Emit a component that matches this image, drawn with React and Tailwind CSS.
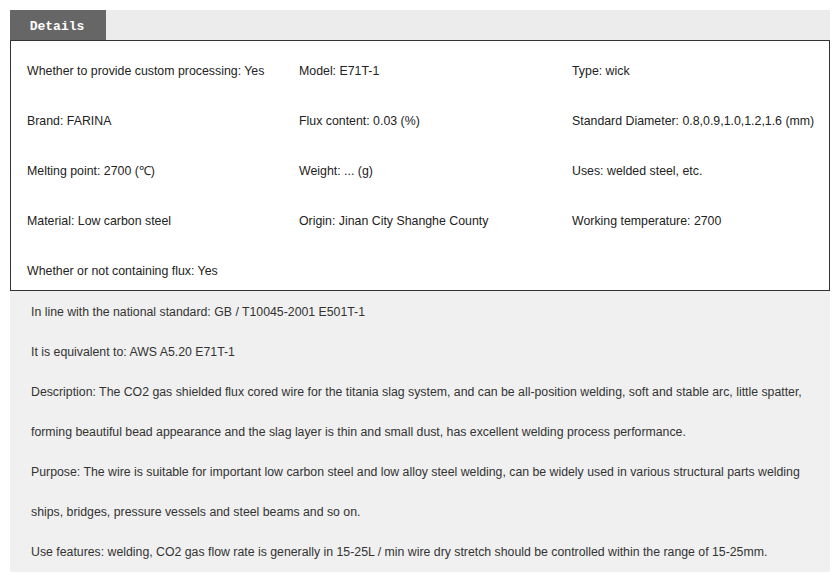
// Product details panel: spec grid + description lines.

const SPECS = [
  ["Whether to provide custom processing: Yes", "Model: E71T-1", "Type: wick"],
  ["Brand: FARINA", "Flux content: 0.03 (%)", "Standard Diameter: 0.8,0.9,1.0,1.2,1.6 (mm)"],
  ["Melting point: 2700 (℃)", "Weight: ... (g)", "Uses: welded steel, etc."],
  ["Material: Low carbon steel", "Origin: Jinan City Shanghe County", "Working temperature: 2700"],
  ["Whether or not containing flux: Yes", "", ""],
];

const LINES = [
  "In line with the national standard: GB / T10045-2001 E501T-1",
  "It is equivalent to: AWS A5.20 E71T-1",
  "Description: The CO2 gas shielded flux cored wire for the titania slag system, and can be all-position welding, soft and stable arc, little spatter,",
  "forming beautiful bead appearance and the slag layer is thin and small dust, has excellent welding process performance.",
  "Purpose: The wire is suitable for important low carbon steel and low alloy steel welding, can be widely used in various structural parts welding",
  "ships, bridges, pressure vessels and steel beams and so on.",
  "Use features: welding, CO2 gas flow rate is generally in 15-25L / min wire dry stretch should be controlled within the range of 15-25mm.",
];

export default function App() {
  return (
    <div className="h-[575px] w-[840px] bg-white pt-[10px] font-['Liberation_Sans',Arial,sans-serif]">
      <div className="mx-[10px] w-[820px]">
        {/* Tab strip */}
        <div className="flex h-[30px] bg-[#ececec]">
          <div className="flex w-[96px] items-center justify-center bg-[#666666] pt-[3px] pr-[2px] font-['Liberation_Mono',monospace] text-[13px] font-bold text-white">
            Details
          </div>
        </div>

        {/* Spec grid */}
        <div className="border border-[#333333] bg-white pt-[20px] pb-[9px] pl-[16px]">
          <div className="grid grid-cols-[272px_273px_1fr] gap-y-[30px] text-[12.35px] leading-[20px] text-[#222222]">
            {SPECS.flat().map((s, i) => (
              <div key={i} className="whitespace-nowrap">
                {s}
              </div>
            ))}
          </div>
        </div>

        {/* Description */}
        <div className="bg-[#f0f0f0] pt-px pl-[21px] text-[12.3px] leading-[40px] text-[#333333]">
          {LINES.map((l) => (
            <p key={l} className="whitespace-nowrap">
              {l}
            </p>
          ))}
        </div>
      </div>
    </div>
  );
}
